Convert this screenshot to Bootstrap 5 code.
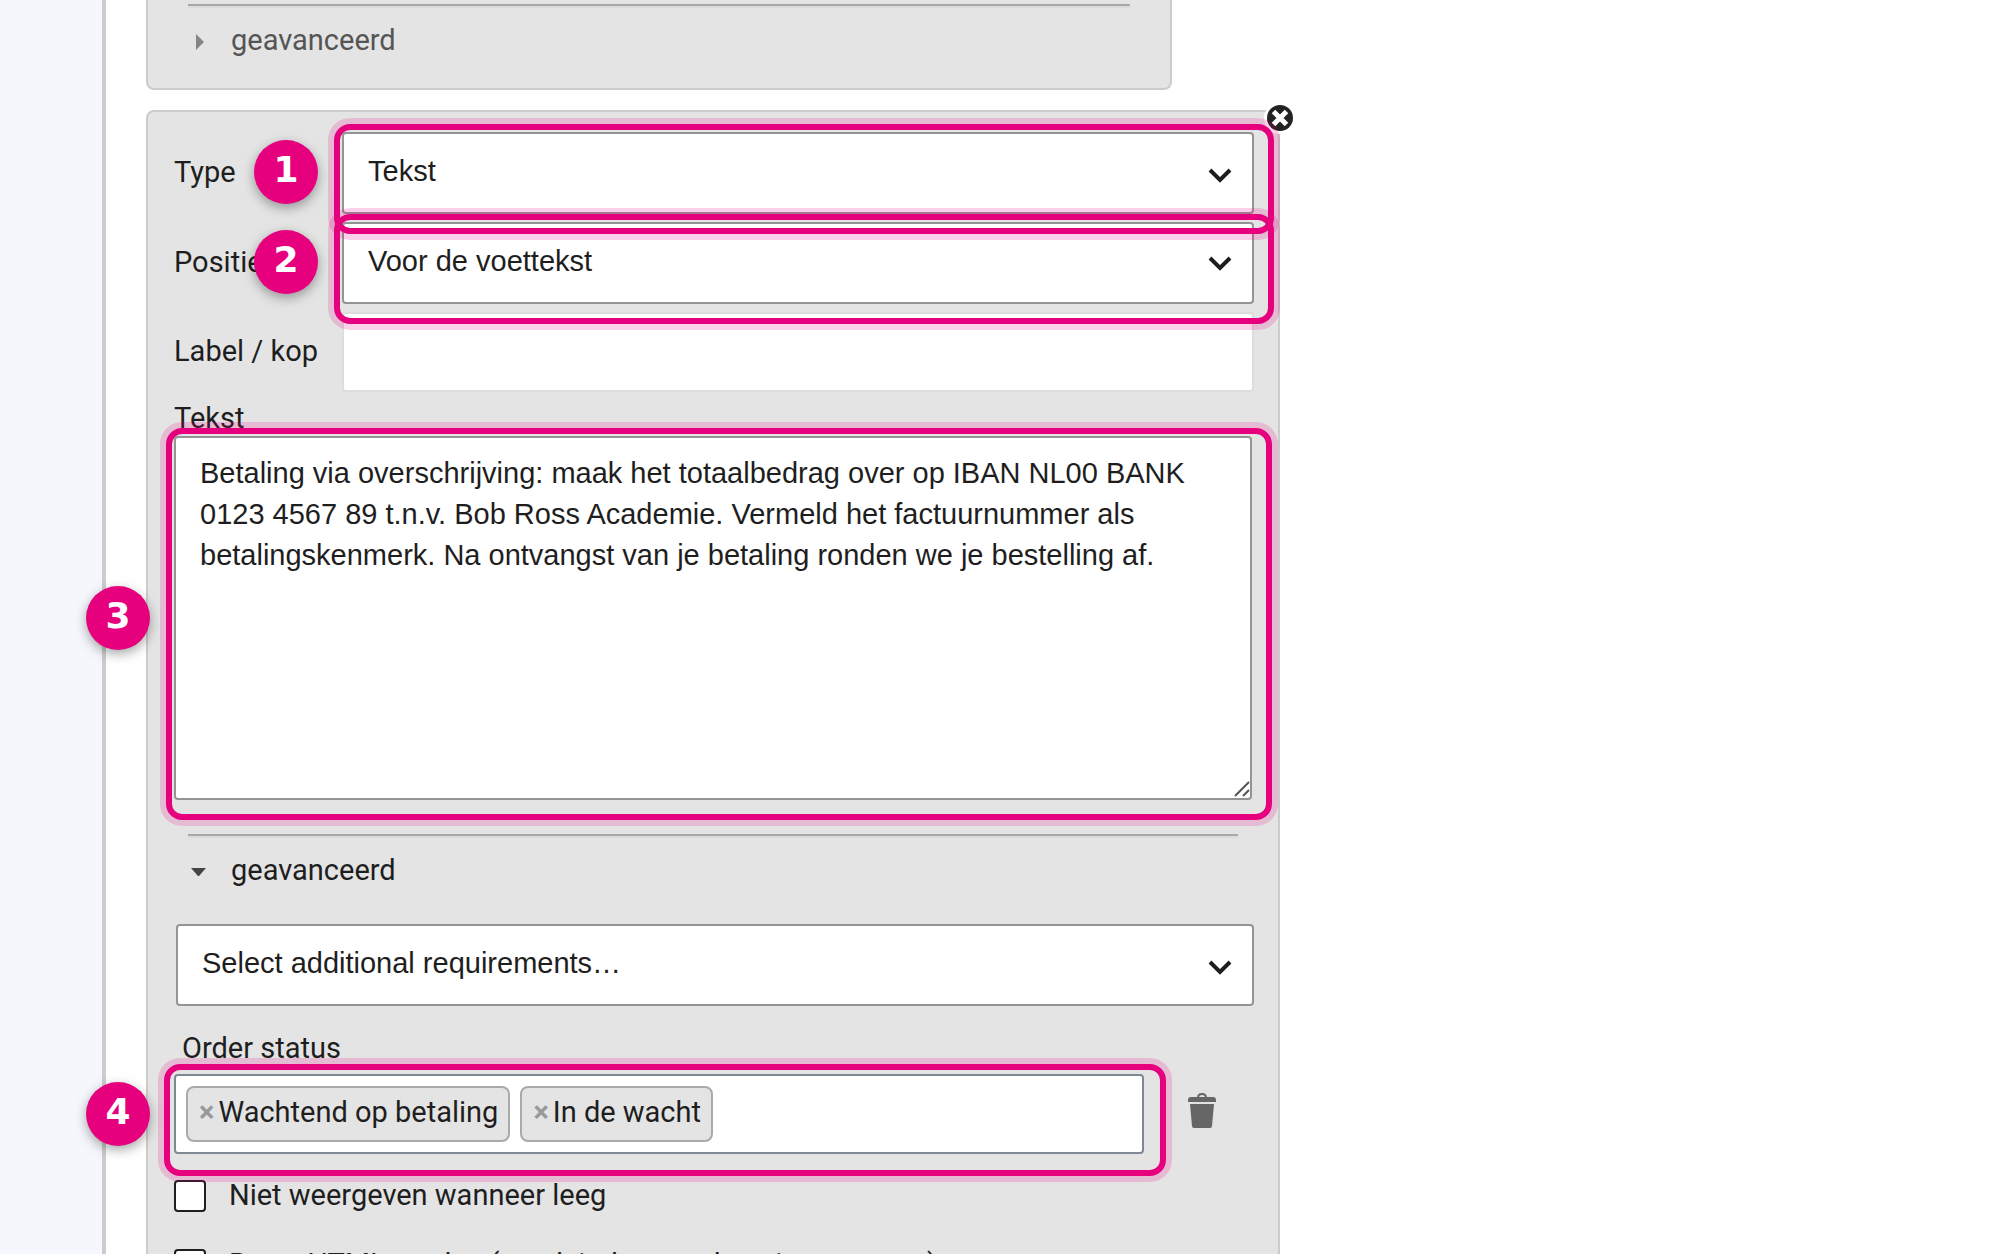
<!DOCTYPE html>
<html lang="nl">
<head>
<meta charset="utf-8">
<meta name="viewport" content="width=device-width, initial-scale=1">
<title>Documentinstellingen</title>
<link href="https://cdn.jsdelivr.net/npm/bootstrap@5.3.0/dist/css/bootstrap.min.css" rel="stylesheet">
<style>
  :root { --pink: #e6007e; --ink: #1e1e1e; --panel: #e4e4e4; }
  body { font: 29px/36px Roboto, sans-serif; color: var(--ink); background: #fff; }
  .app-shell { height: 100vh; overflow: hidden; }
  .side-strip { width: 106px; background: #f5f7fc; border-right: 4px solid #ccc; }
  .editor { margin-left: 40px; width: 57%; max-width: 1134px; }
  .panel { background: var(--panel); border: 2px solid #ccc; border-radius: 8px; }
  .panel-prev { width: 1026px; max-width: 100%; border-top: 0; border-radius: 0 0 8px 8px; padding: 4px 40px 30px; color: #555; }
  .panel-main { margin-top: 20px; padding: 20px 24px 24px 26px; }
  .rule { height: 4px; background: #dcdcdc; border-top: 2px solid #a8a8a8; }
  .adv-rule { margin: 34px 16px 0 14px; }
  .fold { border: 0; background: none; padding: 0; color: inherit; gap: 21px; margin-top: 14px; }
  .fold-open { margin: 14px 0 36px 14px; }
  .fold svg { width: 22px; height: 22px; margin-top: 4px; }
  .control { width: 100%; height: 82px; border: 2px solid #949494; border-radius: 4px; background-color: #fff; color: var(--ink); font: 29px/41px "Liberation Sans", Arial, sans-serif; padding: 0 24px 4px; appearance: none; display: block; outline: 0; }
  .control-plain { height: 80px; border-color: #ddd; }
  textarea.control { height: 364px; padding: 15px 24px; resize: vertical; width: calc(100% - 2px); }
  textarea.control::-webkit-resizer { background: transparent; }
  .grip { position: absolute; right: 4px; bottom: 3px; width: 16px; height: 16px; pointer-events: none; }
  .chev { position: absolute; right: 22px; top: 34px; width: 24px; height: 20px; pointer-events: none; }
  .field-label { width: 168px; flex: none; padding-bottom: 3px; }
  .outline-box { position: absolute; border: 6px solid var(--pink); border-radius: 16px; box-shadow: 0 0 0 6px rgba(230,0,126,.18); pointer-events: none; z-index: 2; }
  .box-row { inset: -8px -20px -20px -8px; }
  .box-text { inset: -8px -18px -20px -8px; }
  .box-tags { inset: -10px -22px -22px -10px; }
  .step { position: absolute; z-index: 3; width: 64px; height: 64px; border-radius: 50%; background: var(--pink); color: #fff; font: bold 36px/60px "DejaVu Sans", sans-serif; text-align: center; box-shadow: 0 4px 12px rgba(0,0,0,.35); left: -88px; top: 8px; }
  .step-side { top: 150px; }
  .remove { position: absolute; top: -11px; right: -19px; z-index: 1; width: 34px; height: 34px; padding: 0; border: 0; background: none; display: flex; }
  .need { margin-left: 2px; }
  .order-label { margin: 24px 0 8px 8px; }
  .chips { width: 970px; height: 80px; background: #fff; border: 2px solid #7e8993; border-radius: 4px; padding: 10px; gap: 10px; }
  .chip { height: 56px; background: var(--panel); border: 2px solid #aaa; border-radius: 8px; padding: 0 10px 4px 11px; gap: 4px; white-space: nowrap; }
  .chip button { border: 0; background: none; padding: 0; color: #999; font-weight: bold; }
  .trash { width: 28px; height: 36px; padding: 0; border: 0; background: none; display: flex; margin: 0 0 8px 44px; }
  .tick { appearance: none; width: 32px; height: 32px; border: 2px solid var(--ink); border-radius: 4px; background: #fff; margin: 0; flex: none; }
  .tick-rows { margin-top: 23px; gap: 31px; }
  .tick-row { gap: 23px; }
  .tick-row label { padding-bottom: 2px; }
</style>
</head>
<body>
<div class="app-shell d-flex">
  <aside class="side-strip flex-shrink-0"></aside>
  <main class="editor flex-shrink-0">
    <section class="panel panel-prev">
      <div class="rule"></div>
      <button class="fold d-flex align-items-center" type="button">
        <svg viewBox="0 0 22 22"><path d="M8 3l8 8-8 8z" fill="#858585"/></svg>geavanceerd
      </button>
    </section>

    <section class="panel panel-main position-relative">
      <button class="remove" type="button" aria-label="Verwijderen">
        <svg width="34" height="34" viewBox="0 0 34 34"><circle cx="17" cy="17" r="16" fill="#fff"/><circle cx="17" cy="17" r="13" fill="#222"/><path d="M10.500 10.500l13 13M23.500 10.500l-13 13" stroke="#fff" stroke-width="5"/></svg>
      </button>

      <div class="d-flex align-items-center mb-2">
        <label class="field-label" for="type">Type</label>
        <div class="position-relative flex-grow-1">
          <select class="control" id="type"><option>Tekst</option></select>
          <svg class="chev" viewBox="0 0 24 20"><path d="M2 4l10 10L22 4" fill="none" stroke="#1e1e1e" stroke-width="4"/></svg>
          <span class="outline-box box-row"></span>
          <span class="step">1</span>
        </div>
      </div>
      <div class="d-flex align-items-center mb-2">
        <label class="field-label" for="positie">Positie</label>
        <div class="position-relative flex-grow-1">
          <select class="control" id="positie"><option>Voor de voettekst</option></select>
          <svg class="chev" viewBox="0 0 24 20"><path d="M2 2l10 10L22 2" fill="none" stroke="#1e1e1e" stroke-width="4"/></svg>
          <span class="outline-box box-row"></span>
          <span class="step">2</span>
        </div>
      </div>
      <div class="d-flex align-items-center mb-2">
        <label class="field-label" for="kop">Label / kop</label>
        <input class="control control-plain flex-grow-1 w-auto" id="kop" type="text">
      </div>

      <label class="d-block" for="tekst">Tekst</label>
      <div class="position-relative">
        <textarea class="control" id="tekst">Betaling via overschrijving: maak het totaalbedrag over op IBAN NL00 BANK 0123 4567 89 t.n.v. Bob Ross Academie. Vermeld het factuurnummer als betalingskenmerk. Na ontvangst van je betaling ronden we je bestelling af.</textarea>
        <svg class="grip" viewBox="0 0 16 16"><path d="M1 15L15 1M9 15l6-6" stroke="#555" stroke-width="2"/></svg>
        <span class="outline-box box-text"></span>
        <span class="step step-side">3</span>
      </div>

      <div class="rule adv-rule"></div>
      <button class="fold fold-open d-flex align-items-center" type="button">
        <svg viewBox="0 0 22 22"><path d="M3 7h15l-7 8h-1z" fill="#444"/></svg>geavanceerd
      </button>

      <div class="position-relative need">
        <select class="control" aria-label="Select additional requirements"><option>Select additional requirements…</option></select>
        <svg class="chev" viewBox="0 0 24 20"><path d="M2 4l10 10L22 4" fill="none" stroke="#1e1e1e" stroke-width="4"/></svg>
      </div>

      <div class="order-label">Order status</div>
      <div class="d-flex align-items-center">
        <div class="position-relative">
          <div class="chips d-flex">
            <span class="chip d-flex align-items-center"><button type="button" aria-label="Wachtend op betaling verwijderen">×</button>Wachtend op betaling</span>
            <span class="chip d-flex align-items-center"><button type="button" aria-label="In de wacht verwijderen">×</button>In de wacht</span>
          </div>
          <span class="outline-box box-tags"></span>
          <span class="step">4</span>
        </div>
        <button class="trash" type="button" aria-label="Wissen">
          <svg width="28" height="36" viewBox="0 0 28 36"><path d="M0 8q0-3 3-3h22q3 0 3 3v2H0zM2 12h24l-2 22q0 2-2 2H6q-2 0-2-2z" fill="#666"/><path d="M10 6q0-4 4-4t4 4" fill="none" stroke="#666" stroke-width="2"/></svg>
        </button>
      </div>

      <div class="tick-rows d-flex flex-column">
        <div class="tick-row d-flex align-items-center"><input class="tick" type="checkbox" id="leeg"><label for="leeg">Niet weergeven wanneer leeg</label></div>
        <div class="tick-row d-flex align-items-center"><input class="tick" type="checkbox" id="html"><label for="html">Ruwe HTML modus (regeleinden worden niet omgezet)</label></div>
      </div>
    </section>
  </main>
</div>
<script src="https://cdn.jsdelivr.net/npm/bootstrap@5.3.0/dist/js/bootstrap.bundle.min.js"></script>
</body>
</html>
